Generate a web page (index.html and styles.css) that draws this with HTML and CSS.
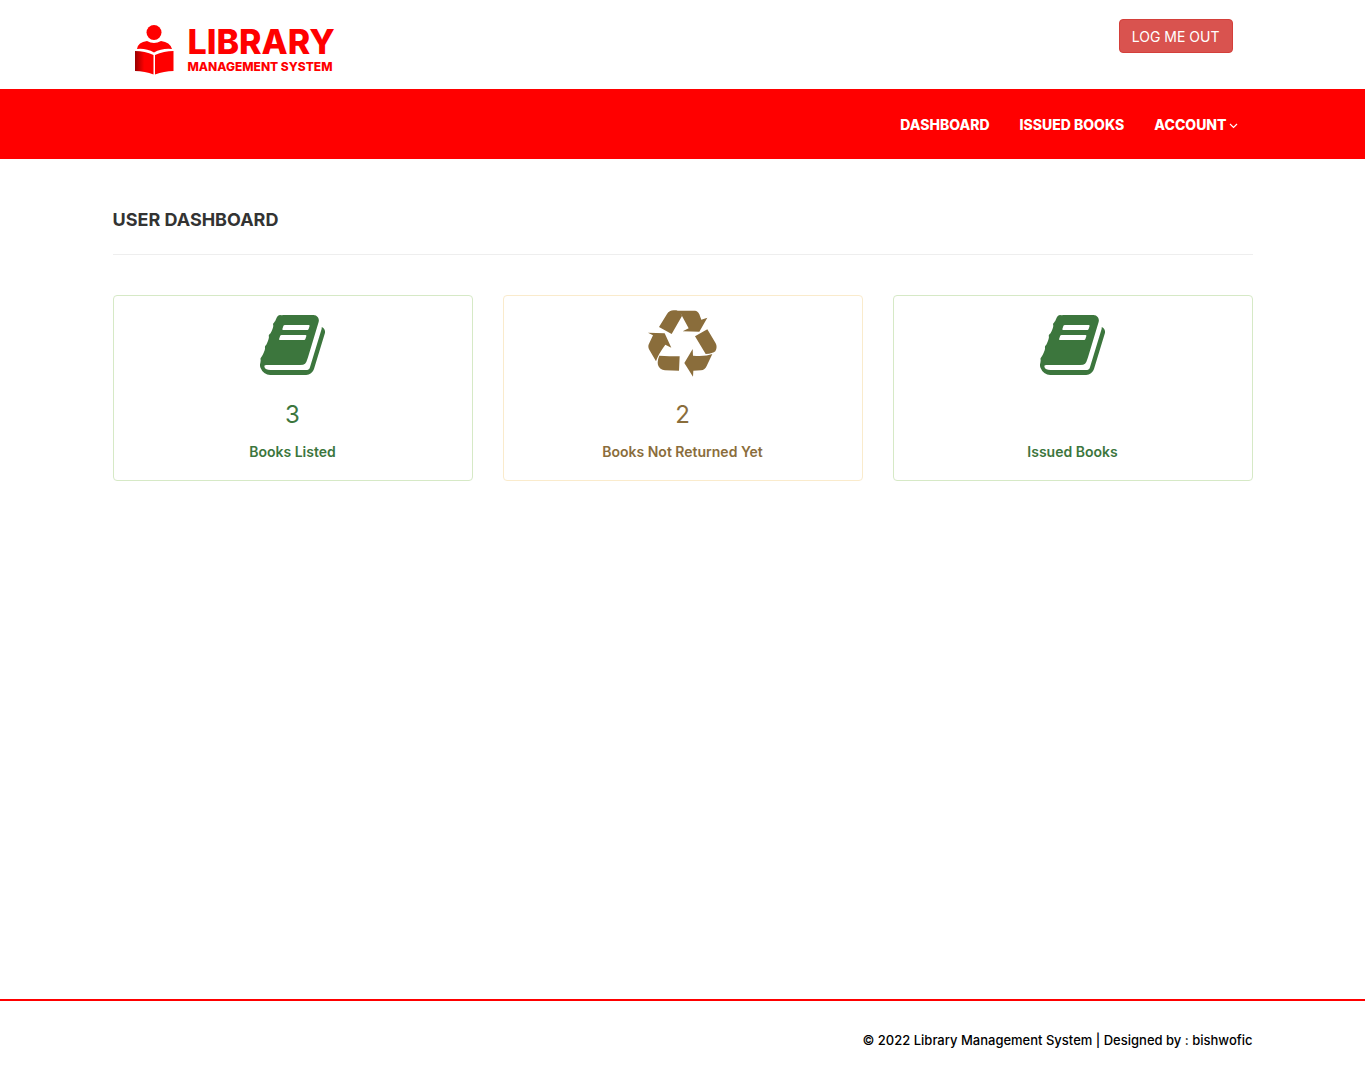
FILE: index.html
```html
<!DOCTYPE html>
<html lang="en">
<head>
<meta charset="utf-8">
<meta name="viewport" content="width=device-width, initial-scale=1">
<title>Library Management System</title>
<link rel="stylesheet" href="styles.css">
</head>
<body>
<svg class="defs" width="0" height="0" aria-hidden="true">
  <symbol id="book" viewBox="0 128 1664 1536"><path d="M1639 478q40 57 18 129l-275 906q-19 64-76.500 107.500t-122.500 43.500h-923q-77 0-148.500-53.500t-99.500-131.500q-24-67-2-127 0-4 3-27t4-37q1-8-3-21.500t-3-19.500q2-11 8-21t16.500-23.500 16.500-23.500q23-38 45-91.500t30-91.500q3-10 .5-30t-.5-28q3-11 17-28t17-23q21-36 42-92t25-90q1-9-2.500-32t.5-28q4-13 22-30.500t22-22.500q19-26 42.500-84.500t27.500-96.500q1-8-3-25.500t-2-26.500q2-8 9-18t18-23 17-21q8-12 16.500-30.500t15-35 16-36 19.500-32 26.500-23.500 36-11.500 47.500 5.500l-1 3q38-9 51-9h761q74 0 114 56t18 130l-274 906q-36 119-71.500 153.500t-128.500 34.500h-869q-27 0-38 15-11 16-1 43 24 70 144 70h923q29 0 56-15.500t35-41.500l300-987q7-22 5-57 38 15 59 43zm-1064 2q-4 13 2 22.500t20 9.500h608q13 0 25.500-9.500t16.500-22.500l21-64q4-13-2-22.500t-20-9.500h-608q-13 0-25.500 9.500t-16.500 22.500zm-83 256q-4 13 2 22.500t20 9.500h608q13 0 25.500-9.500t16.500-22.500l21-64q4-13-2-22.500t-20-9.500h-608q-13 0-25.500 9.500t-16.500 22.500z"/></symbol>
</svg>
<header class="container header">
  <a class="brand" href="#">
    <svg class="brand-mark" viewBox="0 0 39 50" aria-hidden="true">
      <defs>
        <linearGradient id="page" x1="0" x2="1" y1="0" y2="0"><stop offset="0" stop-color="#900"/><stop offset=".5" stop-color="#f00"/></linearGradient>
      </defs>
      <circle cx="19" cy="7.500" r="7.500" fill="red"/>
      <path d="M2 24Q3 17 12 16Q19 20 26 16Q35 17 37 24Q27 23 19 27.500Q11 23 2 24Z" fill="red"/>
      <path d="M0 26Q10 26 18.500 30V49.500Q10 46 0 46Z" fill="url(#page)"/>
      <path d="M38.500 26Q29 26 20 30V49.500Q29 46 38.500 46Z" fill="red"/>
    </svg>
    <span class="brand-text"><span class="brand-name">LIBRARY</span><span class="brand-sub">MANAGEMENT SYSTEM</span></span>
  </a>
  <button class="logout" type="button">LOG ME OUT</button>
</header>
<nav class="nav">
  <div class="container nav-list">
    <a href="#">DASHBOARD</a>
    <a href="#">ISSUED BOOKS</a>
    <a href="#">ACCOUNT<svg class="caret" viewBox="0 0 9 6" aria-hidden="true"><path d="M1 1l3.500 3.500L8 1" fill="none" stroke="currentColor" stroke-width="1.200"/></svg></a>
  </div>
</nav>
<main class="container main">
  <h1>USER DASHBOARD</h1>
  <div class="cards">
    <a class="card success" href="#">
      <svg class="icon book" aria-hidden="true"><use href="#book"/></svg>
      <span class="count">3</span>
      <span class="label">Books Listed</span>
    </a>
    <a class="card warning" href="#">
      <svg class="icon recycle" viewBox="177 28 207 201" aria-hidden="true"><path d="M210 79L234 40Q241 29 254 29L262 29Q270 30 279 46L248 100ZM266 30H318Q326 30 331 41L337 57L355 51L331 93L281 92L299 83L281 50Q276 37 266 30ZM318 107L355 86L380 128Q386 140 379 152Q372 159 350 160ZM286 187L311 145L312 165Q350 168 370 160L353 196Q348 208 336 209L313 210L312 228ZM211 165Q240 167 272 167L270 210L228 209Q212 208 207 193Q204 180 211 165ZM177 96L227 98L247 141L229 132Q208 160 201 182L180 146Q176 136 180 129L192 104Z"/></svg>
      <span class="count">2</span>
      <span class="label">Books Not Returned Yet</span>
    </a>
    <a class="card success" href="#">
      <svg class="icon book" aria-hidden="true"><use href="#book"/></svg>
      <span class="count"></span>
      <span class="label">Issued Books</span>
    </a>
  </div>
</main>
<footer class="footer">
  <div class="container">© 2022 Library Management System | Designed by : <a href="#">bishwofic</a></div>
</footer>
</body>
</html>
```
FILE: styles.css
```css
* { box-sizing: border-box; }
body {
  display: flex;
  flex-direction: column;
  min-height: 100vh;
  margin: 0;
  background: #fff;
  color: #333;
  font: 14px/20px Inter, "Liberation Sans", sans-serif;
}
a { color: inherit; text-decoration: none; }
.defs { position: absolute; }
.container { width: 100%; max-width: 1170px; margin: 0 auto; padding: 0 15px; }

.header { display: flex; align-items: flex-start; justify-content: space-between; height: 89px; padding: 19px 35px 0; }
.brand { display: flex; gap: 14px; padding: 6px 0 0 2px; color: #f00; }
.brand-mark { width: 39px; height: 50px; }
.brand-text { display: flex; flex-direction: column; }
.brand-name { font-size: 34px; line-height: 34px; font-weight: 800; }
.brand-sub { font-size: 12px; line-height: 16px; font-weight: 800; }
.logout {
  height: 34px;
  padding: 2px 12px 0;
  border: 1px solid #d43f3a;
  border-radius: 4px;
  background: #d9534f;
  color: #fff;
  font: inherit;
}

.nav { background: #f00; color: #fff; }
.nav-list { display: flex; justify-content: flex-end; gap: 30px; padding: 26px 30px 24px; font-size: 14px; font-weight: 800; }
.caret { width: 9px; height: 6px; margin-left: 2px; vertical-align: 1px; }

.main { flex: 1; }
h1 {
  margin: 51px 0 40px;
  padding-bottom: 24px;
  border-bottom: 1px solid #eee;
  font-size: 18px;
  line-height: 20px;
  font-weight: 700;
}
.cards { display: grid; grid-template-columns: repeat(3, 1fr); gap: 30px; }
.card {
  display: flex;
  flex-direction: column;
  align-items: center;
  padding: 14px 14px 18px;
  border: 1px solid #d6e9c6;
  border-radius: 4px;
}
.success { color: #3c763d; }
.warning { border-color: #faebcc; color: #8a6d3b; }
.icon { fill: currentColor; }
.book { width: 65px; height: 60px; margin: 5px 0; }
.recycle { width: 69px; height: 67px; margin-bottom: 3px; }
.count { height: 26px; margin: 22px 0 14px; font-size: 24px; line-height: 26px; }
.label { font-weight: 600; }

.footer { padding: 29px 0 28px; border-top: 2px solid #f00; color: #000; font-size: 13px; font-weight: 500; text-align: right; }
```
